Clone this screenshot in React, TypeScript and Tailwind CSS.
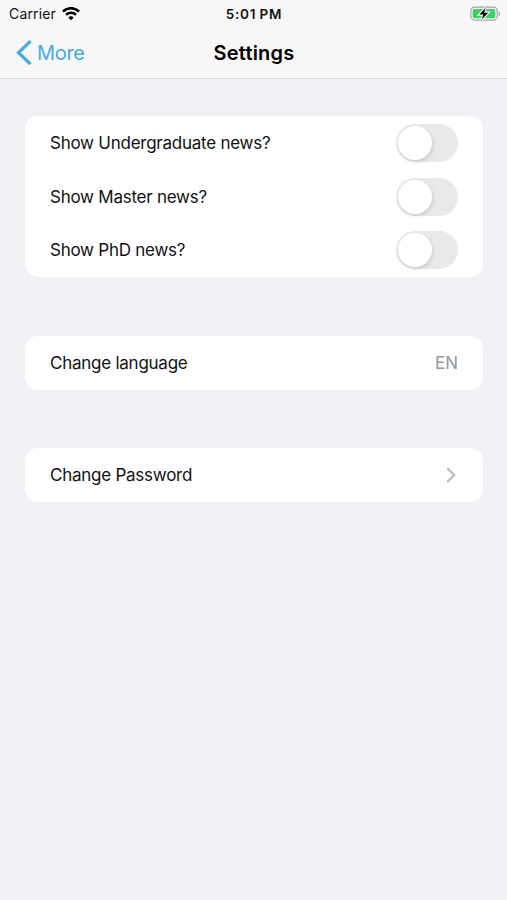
import { useState } from "react";
import type { ReactNode } from "react";

export default function App() {
  const [news, setNews] = useState({ undergraduate: false, master: false, phd: false });

  const toggle = (key: keyof typeof news) => {
    setNews((prev) => ({ ...prev, [key]: !prev[key] }));
  };

  return (
    <div className="h-[900px] w-full bg-[#f0f0f5] font-['Inter',sans-serif] text-[#111] overflow-hidden">
      {/* Status bar + navigation */}
      <header className="h-[79px] bg-[#f7f7f7] border-b border-[#dcdcde]">
        <div className="h-[27px] grid grid-cols-3 items-center pl-[9px] pr-[6px]">
          <div className="flex items-center gap-[6px]">
            <span className="text-[14px] leading-[27px] tracking-[0.15px]">Carrier</span>
            <WifiIcon />
          </div>
          <span className="pt-px pr-[2px] text-center text-[13.5px] leading-[26px] font-semibold tracking-[0.8px] [word-spacing:-1px]">
            5:01 PM
          </span>
          <div className="flex justify-end">
            <BatteryIcon />
          </div>
        </div>
        <div className="h-[51px] grid grid-cols-3 items-center pl-[15px] pr-[14px]">
          <button className="flex items-center gap-[5px] text-[#47a9e3]">
            <svg className="w-[17px] h-[26px]" viewBox="0 0 17 26" fill="none" stroke="currentColor" strokeWidth="3.2">
              <path d="M15.5 1.2 3.5 12.7l12 11.5" />
            </svg>
            <span className="text-[20px] leading-[26px] tracking-[-0.3px]">More</span>
          </button>
          <h1 className="text-center text-[20px] leading-[26px] font-semibold tracking-[0.2px] text-black">Settings</h1>
        </div>
      </header>

      <main className="pl-[25px] pr-[24px] pt-[37px] flex flex-col gap-[58.6px]">
        <Section>
          <Row label="Show Undergraduate news?">
            <Toggle on={news.undergraduate} onClick={() => toggle("undergraduate")} />
          </Row>
          <Row label="Show Master news?">
            <Toggle on={news.master} onClick={() => toggle("master")} />
          </Row>
          <Row label="Show PhD news?">
            <Toggle on={news.phd} onClick={() => toggle("phd")} />
          </Row>
        </Section>

        <Section>
          <Row label="Change language">
            <span className="text-[17px] leading-[24px] text-[#97979a]">EN</span>
          </Row>
        </Section>

        <Section>
          <Row label="Change Password">
            <svg className="w-[10px] h-[16px] mr-[2px]" viewBox="0 0 10 16" fill="none" stroke="#bebec0" strokeWidth="2.4">
              <path d="m1.2 1.2 7 6.8-7 6.8" />
            </svg>
          </Row>
        </Section>
      </main>
    </div>
  );
}

function Section({ children }: { children: ReactNode }) {
  return <section className="bg-white rounded-[13px]">{children}</section>;
}

function Row({ label, children }: { label: string; children: ReactNode }) {
  return (
    <div className="h-[53.8px] px-[25px] flex items-center justify-between">
      <span className="text-[17px] leading-[24px] tracking-[-0.25px]">{label}</span>
      {children}
    </div>
  );
}

function Toggle({ on, onClick }: { on: boolean; onClick: () => void }) {
  return (
    <button
      role="switch"
      aria-checked={on}
      onClick={onClick}
      className={`w-[62px] h-[38px] rounded-full p-[2px] flex items-center ${
        on ? "bg-[#34c759] justify-end" : "bg-[#e9e9ea] justify-start"
      }`}
    >
      <span className="w-[34px] h-[34px] rounded-full bg-white shadow-[1px_2px_4px_rgba(0,0,0,0.13)]" />
    </button>
  );
}

function WifiIcon() {
  return (
    <svg className="w-[18px] h-[14px]" viewBox="0 0 18 14" fill="none" stroke="#000" strokeWidth="2.5">
      <path d="M.9 4.5a11.5 11.5 0 0 1 16.2 0" />
      <path d="M4 7.9a7.1 7.1 0 0 1 10 0" />
      <path d="M9 13.3 6.3 10.5a3.9 3.9 0 0 1 5.4 0Z" fill="#000" stroke="none" />
    </svg>
  );
}

function BatteryIcon() {
  return (
    <svg className="w-[31px] h-[16px]" viewBox="0 0 31 16">
      <rect x=".8" y="1.1" width="26.4" height="13" rx="4" fill="#f7f7f7" stroke="#a5a5a7" strokeWidth="1.2" />
      <rect x="2.7" y="3" width="22.6" height="9.2" rx="2" fill="#3bd164" />
      <path d="M28.6 5.3c2 .6 2 4 0 4.6Z" fill="#a5a5a7" />
      <path
        d="M15.6 1.8 9.4 8.6h3.9l-1.6 5L18.2 6.8h-4Z"
        fill="#000"
        stroke="#f7f7f7"
        strokeWidth="2.4"
        paintOrder="stroke"
      />
    </svg>
  );
}
